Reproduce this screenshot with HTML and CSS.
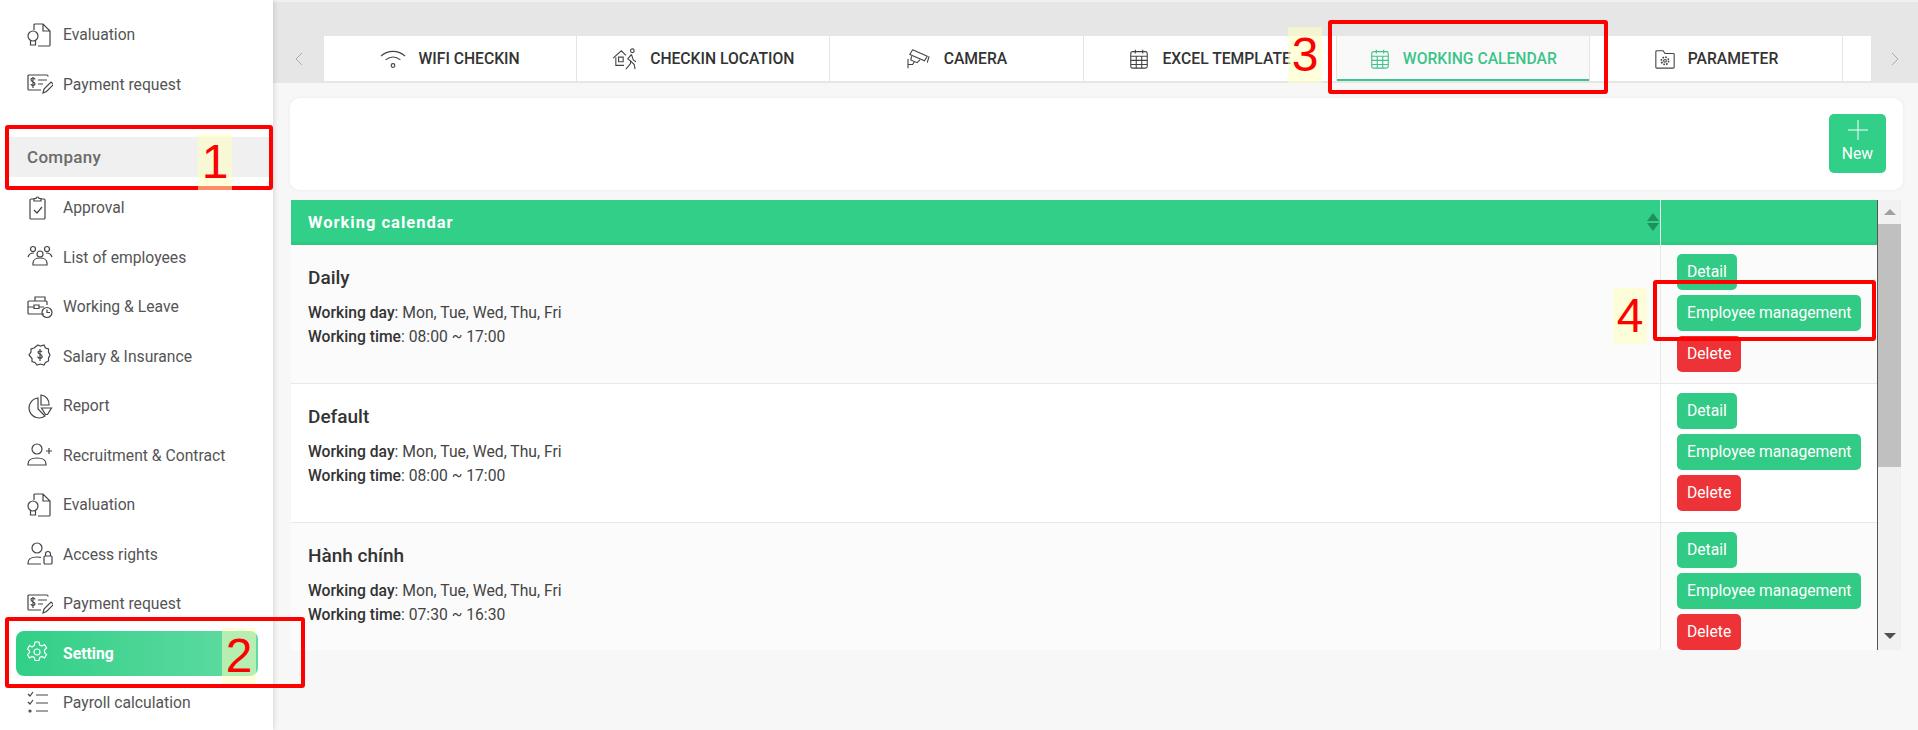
FILE: index.html
```html
<!DOCTYPE html>
<html lang="en">
<head>
    <meta charset="UTF-8">
    <title>Working calendar</title>
    <link rel="stylesheet" href="styles.css">
</head>
<body>
    <aside class="sidebar">
        <a class="nav-item">
            <svg class="icon" viewBox="0 0 26 26"><path d="M7 8V3a1 1 0 0 1 1-1h8l7 7v14a1 1 0 0 1-1 1H11M16 2v7h7"/><circle cx="6" cy="14" r="5"/><path d="M3.500 18.500V23h5v-4.500"/></svg>
            <span>Evaluation</span>
        </a>
        <a class="nav-item">
            <svg class="icon" viewBox="0 0 26 26"><path d="M21 5.500V5a1 1 0 0 0-1-1H2a1 1 0 0 0-1 1v13a1 1 0 0 0 1 1h12M8 8.500a2 1.500 0 0 0-4 0c0 3 4 1.500 4 4.500a2 1.500 0 0 1-4 0M6 6v11M11 9h9M11 13h5"/><path d="M16 22l1-4 7-7 2.500 2.500-7 7z"/></svg>
            <span>Payment request</span>
        </a>
        <div class="nav-title">Company</div>
        <a class="nav-item">
            <svg class="icon" viewBox="0 0 26 26"><path d="M7 4H4a1 1 0 0 0-1 1v18a1 1 0 0 0 1 1h13a1 1 0 0 0 1-1V5a1 1 0 0 0-1-1h-3"/><path d="M7 6V3.500h2a1.500 1.500 0 0 1 3 0h2V6zM7 15l3 3 5-6"/></svg>
            <span>Approval</span>
        </a>
        <a class="nav-item">
            <svg class="icon" viewBox="0 0 26 26"><circle cx="6" cy="5" r="2.500"/><circle cx="20" cy="5" r="2.500"/><circle cx="13" cy="10" r="3"/><path d="M1 13c1-3 3-4 5-4h1M25 13c-1-3-3-4-5-4h-1M6 21v-2c0-3 3-5 7-5s7 2 7 5v2z"/></svg>
            <span>List of employees</span>
        </a>
        <a class="nav-item">
            <svg class="icon" viewBox="0 0 26 26"><path d="M8 7V3h10v4M17 20H2a1 1 0 0 1-1-1V8a1 1 0 0 1 1-1h17a1 1 0 0 1 1 1v3M1 13h6M12 13h5M7 11h5v3.500H7z"/><circle cx="20" cy="18.500" r="5"/><path d="M20 15.500v3h3"/></svg>
            <span>Working &amp; Leave</span>
        </a>
        <a class="nav-item">
            <svg class="icon" viewBox="0 0 26 26"><path d="M11 2l2.500 1L17 2l1.500 3 3 1 0 3L23 12l-1.500 3 0 3-3 1.500L17 22l-3.500-1L10 22l-2-2.500-3-1 0-3L2 12l2-3 0-3 3-1z"/><path d="M15 9a2.200 1.700 0 0 0-4 0c0 3 4.200 1.500 4.200 4.500a2.200 1.700 0 0 1-4.400 0M13 6v12"/></svg>
            <span>Salary &amp; Insurance</span>
        </a>
        <a class="nav-item">
            <svg class="icon" viewBox="0 0 26 26"><path d="M11 5a10 10 0 1 0 7 18l-7-7z"/><path d="M14 2a9 9 0 0 1 8 10h-8zM14.500 15h10l-4 6.500h-2z"/></svg>
            <span>Report</span>
        </a>
        <a class="nav-item">
            <svg class="icon" viewBox="0 0 26 26"><circle cx="10" cy="7" r="5"/><path d="M1 23v-1c0-4 4-6 9-6s9 2 9 6v1zM19 9h6M22 6v6"/></svg>
            <span>Recruitment &amp; Contract</span>
        </a>
        <a class="nav-item">
            <svg class="icon" viewBox="0 0 26 26"><path d="M7 8V3a1 1 0 0 1 1-1h8l7 7v14a1 1 0 0 1-1 1H11M16 2v7h7"/><circle cx="6" cy="14" r="5"/><path d="M3.500 18.500V23h5v-4.500"/></svg>
            <span>Evaluation</span>
        </a>
        <a class="nav-item">
            <svg class="icon" viewBox="0 0 26 26"><circle cx="10" cy="7" r="5"/><path d="M14 23H1v-1c0-4 4-6 9-6 1 0 3 0 4 .5"/><rect x="17" y="15" width="8" height="8" rx="1"/><path d="M18.500 15v-2a2.500 2.500 0 0 1 5 0v2"/></svg>
            <span>Access rights</span>
        </a>
        <a class="nav-item">
            <svg class="icon" viewBox="0 0 26 26"><path d="M21 5.500V5a1 1 0 0 0-1-1H2a1 1 0 0 0-1 1v13a1 1 0 0 0 1 1h12M8 8.500a2 1.500 0 0 0-4 0c0 3 4 1.500 4 4.500a2 1.500 0 0 1-4 0M6 6v11M11 9h9M11 13h5"/><path d="M16 22l1-4 7-7 2.500 2.500-7 7z"/></svg>
            <span>Payment request</span>
        </a>
        <a class="nav-item active">
            <svg class="icon" viewBox="0 0 26 26"><circle cx="10" cy="12" r="3"/><path d="M8 2h4l.700 3 2.300 1 2.500-1.500 2 3.500-2 2 0 2.500 2 2-2 3.500-2.500-1.500-2.300 1-.700 3H8l-.700-3-2.300-1-2.500 1.500-2-3.500 2-2V11l-2-2 2-3.500L5 7l2.300-1.500z"/></svg>
            <span>Setting</span>
        </a>
        <a class="nav-item">
            <svg class="icon" viewBox="0 0 26 26"><path d="M1 4l2 2 3-4M1 12l2 2 3-4M9 5h12M9 13h12M9 21h12"/><circle cx="3" cy="21" r="1"/></svg>
            <span>Payroll calculation</span>
        </a>
    </aside>

    <main class="content">
        <div class="tab-bar">
            <div class="tab-arrow">
                <svg viewBox="0 0 10 16"><path d="M8 2L2 8l6 6"/></svg>
            </div>
            <div class="tabs">
                <a class="tab">
                    <svg class="icon" viewBox="0 0 28 22"><path d="M1 8c7-7 19-7 26 0M6 12c5-4 11-4 16 0"/><circle cx="14" cy="18" r="2"/></svg>
                    WIFI CHECKIN
                </a>
                <a class="tab">
                    <svg class="icon" viewBox="0 0 28 24"><path d="M1 11L10 3l5 5M4 10v9h9M7 10h5v5H7z"/><circle cx="22" cy="3" r="2"/><path d="M21 7l-4 5 3 2v3l-5 6M21 7l2 6 3 2M20 14l4 4 1 5"/></svg>
                    CHECKIN LOCATION
                </a>
                <a class="tab">
                    <svg class="icon" viewBox="0 0 26 24"><path d="M6 2l16 7-3 5L3 7zM5 9l-1 4 7 3 3-3M24 9l-2 7M1 12v10M1 18h5l2-3"/></svg>
                    CAMERA
                </a>
                <a class="tab">
                    <svg class="icon square" viewBox="0 0 24 24"><rect x="3" y="4" width="18" height="18" rx="2"/><path d="M3 9h18M3 13.500h18M3 18h18M9 9v13M15 9v13M8 2v4M16 2v4"/></svg>
                    EXCEL TEMPLATE
                </a>
                <a class="tab current">
                    <svg class="icon square" viewBox="0 0 24 24"><rect x="3" y="4" width="18" height="18" rx="2"/><path d="M3 9h18M3 13.500h18M3 18h18M9 9v13M15 9v13M8 2v4M16 2v4"/></svg>
                    WORKING CALENDAR
                </a>
                <a class="tab">
                    <svg class="icon square" viewBox="0 0 24 24"><path d="M2 20V4a1 1 0 0 1 1-1h7l2 3h9a1 1 0 0 1 1 1v14a1 1 0 0 1-1 1H3a1 1 0 0 1-1-1z"/><circle cx="12" cy="14" r="1.500"/><circle cx="12" cy="14" r="4" stroke-width="1.800" stroke-dasharray="1.800 1.300"/></svg>
                    PARAMETER
                </a>
                <a class="tab"></a>
            </div>
            <div class="tab-arrow">
                <svg viewBox="0 0 10 16"><path d="M2 2l6 6-6 6"/></svg>
            </div>
        </div>

        <section class="toolbar">
            <button class="btn-new">
                <svg viewBox="0 0 20 20"><path d="M10 0v20M0 10h20"/></svg>
                New
            </button>
        </section>

        <section class="table-wrap">
            <div class="table">
                <div class="table-head">
                    <div class="head-cell">
                        Working calendar
                        <span class="sort"></span>
                    </div>
                    <div class="head-cell"></div>
                </div>

                <div class="row">
                    <div class="cell">
                        <h3>Daily</h3>
                        <p><strong>Working day</strong>: Mon, Tue, Wed, Thu, Fri</p>
                        <p><strong>Working time</strong>: 08:00 ~ 17:00</p>
                    </div>
                    <div class="cell actions">
                        <button class="btn">Detail</button>
                        <button class="btn">Employee management</button>
                        <button class="btn danger">Delete</button>
                    </div>
                </div>
                <div class="row">
                    <div class="cell">
                        <h3>Default</h3>
                        <p><strong>Working day</strong>: Mon, Tue, Wed, Thu, Fri</p>
                        <p><strong>Working time</strong>: 08:00 ~ 17:00</p>
                    </div>
                    <div class="cell actions">
                        <button class="btn">Detail</button>
                        <button class="btn">Employee management</button>
                        <button class="btn danger">Delete</button>
                    </div>
                </div>
                <div class="row">
                    <div class="cell">
                        <h3>Hành chính</h3>
                        <p><strong>Working day</strong>: Mon, Tue, Wed, Thu, Fri</p>
                        <p><strong>Working time</strong>: 07:30 ~ 16:30</p>
                    </div>
                    <div class="cell actions">
                        <button class="btn">Detail</button>
                        <button class="btn">Employee management</button>
                        <button class="btn danger">Delete</button>
                    </div>
                </div>
            </div>
            <div class="scrollbar">
                <span class="scroll-up"></span>
                <span class="scroll-thumb"></span>
                <span class="scroll-down"></span>
            </div>
        </section>
    </main>

    <!-- red markup drawn on top of the screenshot -->
    <div class="mark box-1"></div>
    <div class="mark box-2"></div>
    <div class="mark box-3"></div>
    <div class="mark box-4"></div>
    <div class="step step-1">1</div>
    <div class="step step-2">2</div>
    <div class="step step-3">3</div>
    <div class="step step-4">4</div>
</body>
</html>
```

FILE: styles.css
```css
* {
    box-sizing: border-box;
}

body {
    margin: 0;
    height: 730px;
    overflow: hidden;
    display: flex;
    font-family: Roboto, Arial, sans-serif;
    font-size: 15.7px;
    color: #333;
    background-color: #f7f7f7;
}

.icon {
    flex: none;
    fill: none;
    stroke: currentColor;
    stroke-width: 1.2;
}

/* Sidebar */
.sidebar {
    flex: 0 0 273px;
    height: 730px;
    overflow: hidden;
    padding-top: 10px;
    background-color: white;
    box-shadow: 0 0 6px rgba(0, 0, 0, 0.18);
    position: relative;
    z-index: 1;
}

.nav-item {
    display: flex;
    align-items: center;
    gap: 10px;
    height: 49.5px;
    padding-left: 27px;
    color: #555;
}

.nav-item .icon {
    width: 26px;
    height: 26px;
    color: #444;
}

.nav-item.active {
    height: 45px;
    margin: 2px 15px 2.500px 16px;
    padding-left: 11px;
    border-radius: 8px;
    font-weight: 700;
    color: white;
    background: linear-gradient(90deg, #31cf87, #62dba3);
}

.nav-item.active .icon {
    color: white;
}

.nav-title {
    height: 40px;
    margin: 28px 3px 6px 8px;
    padding-left: 19px;
    line-height: 40px;
    font-size: 17px;
    font-weight: 500;
    letter-spacing: 0.3px;
    color: #6b6b6b;
    background-color: #f0f0f0;
}

/* Main column */
.content {
    flex: 1;
    min-width: 0;
}

.tab-bar {
    display: flex;
    height: 83px;
    padding-top: 34px;
    background-color: #e6e6e6;
    border-top: 2px solid #f0f0f0;
}

.tab-arrow {
    flex: 0 0 51px;
    height: 45px;
    display: flex;
    align-items: center;
    justify-content: center;
}

.tab-arrow:last-child {
    flex-basis: 47px;
}

.tab-arrow svg {
    width: 10px;
    height: 16px;
    fill: none;
    stroke: #aaa;
    stroke-width: 1;
}

.tabs {
    flex: 1;
    min-width: 0;
    display: flex;
    height: 45px;
    overflow: hidden;
    background-color: white;
}

.tab {
    flex: 0 0 253.200px;
    display: flex;
    align-items: center;
    justify-content: center;
    gap: 12px;
    font-size: 15.7px;
    font-weight: 500;
    color: #333;
    border-right: 1px solid #e4e4e4;
}

.tab .icon {
    width: 26px;
    height: 22px;
    color: #444;
}

.tab .icon.square {
    width: 22px;
}

.tab.current {
    color: #3cc48a;
    background-color: #f9f9f9;
    box-shadow: inset 0 -2px 0 #3cc48a;
}

.tab.current .icon {
    color: #3cc48a;
}

.toolbar {
    display: flex;
    justify-content: flex-end;
    height: 92px;
    margin: 15px 15px 10px 17px;
    padding: 16px 17px;
    border-radius: 10px;
    background-color: white;
    box-shadow: 0 0 4px rgba(0, 0, 0, 0.05);
}

.btn-new {
    width: 57px;
    height: 59px;
    padding: 6px 0 0;
    display: flex;
    flex-direction: column;
    align-items: center;
    gap: 4px;
    border: none;
    border-radius: 5px;
    font-family: inherit;
    font-size: 15.7px;
    color: white;
    background-color: #31cf87;
}

.btn-new svg {
    width: 20px;
    height: 20px;
    fill: none;
    stroke: white;
    stroke-width: 1;
}

/* Table */
.table-wrap {
    display: flex;
    height: 450px;
    margin: 0 17px 0 18px;
    overflow: hidden;
}

.table {
    width: 1587px;
    overflow: hidden;
    border-right: 1px solid #555;
}

.table-head {
    display: grid;
    grid-template-columns: 1fr 217px;
    height: 45px;
    color: white;
    background-color: #31cf87;
    border-bottom: 3px solid #2cc97f;
}

.head-cell {
    position: relative;
    padding-left: 17px;
    line-height: 45px;
    font-size: 16.500px;
    font-weight: 700;
    letter-spacing: 1px;
}

.head-cell + .head-cell {
    border-left: 1px solid #e8f8f0;
}

/* two little triangles */
.sort {
    position: absolute;
    right: 1px;
    top: 13px;
    width: 12px;
    height: 18px;
}

.sort::before,
.sort::after {
    content: "";
    position: absolute;
    left: 0;
    border-left: 6px solid transparent;
    border-right: 6px solid transparent;
}

.sort::before {
    top: 0;
    border-bottom: 8px solid #1f8f5c;
}

.sort::after {
    bottom: 0;
    border-top: 8px solid #1f8f5c;
}

.row {
    display: grid;
    grid-template-columns: 1fr 217px;
    height: 139px;
    background-color: #fbfbfb;
    border-bottom: 1px solid #e8e8e8;
}

.row:nth-child(odd) {
    background-color: white;
}

.cell {
    padding: 22px 17px 0;
}

.cell h3 {
    margin: 0 0 13px;
    font-size: 19px;
    line-height: 21px;
    font-weight: 500;
    color: #333;
}

.cell p {
    margin: 0;
    line-height: 24px;
    color: #444;
}

.cell strong {
    font-weight: 500;
    color: #333;
}

.actions {
    display: flex;
    flex-direction: column;
    align-items: flex-start;
    gap: 5px;
    padding: 9px 0 0 16px;
    border-left: 1px solid #e8e8e8;
}

.btn {
    height: 36px;
    padding: 0 10px 2px;
    border: none;
    border-radius: 5px;
    font-family: inherit;
    font-size: 15.7px;
    white-space: nowrap;
    color: white;
    background-color: #31cb85;
}

.btn.danger {
    background-color: #ee3338;
}

.scrollbar {
    flex: 1;
    display: flex;
    flex-direction: column;
    align-items: center;
    background-color: #f1f1f1;
    position: relative;
}

.scroll-up,
.scroll-down {
    position: absolute;
    left: 6px;
    width: 0;
    height: 0;
    border-left: 6px solid transparent;
    border-right: 6px solid transparent;
}

.scroll-up {
    top: 9px;
    border-bottom: 6px solid #a0a0a0;
}

.scroll-down {
    bottom: 11px;
    border-top: 6px solid #505050;
}

.scroll-thumb {
    width: 100%;
    height: 243px;
    margin-top: 24px;
    background-color: #c0c0c0;
}

/* Annotations */
.mark {
    position: absolute;
    border: 4px solid #f00;
    border-radius: 3px;
    z-index: 3;
}

.box-1 {
    left: 5px;
    top: 125px;
    width: 268px;
    height: 65px;
}

.box-2 {
    left: 5px;
    top: 617px;
    width: 300px;
    height: 71px;
}

.box-3 {
    left: 1328px;
    top: 20px;
    width: 280px;
    height: 74px;
}

.box-4 {
    left: 1653px;
    top: 280px;
    width: 223px;
    height: 61px;
}

.step {
    position: absolute;
    width: 34px;
    height: 56px;
    line-height: 56px;
    text-align: center;
    font-family: "Liberation Sans", Arial, sans-serif;
    font-size: 48px;
    color: #f00;
    background-color: rgba(255, 255, 190, 0.55);
    z-index: 4;
}

.step-1 {
    left: 198px;
    top: 134px;
}

.step-2 {
    left: 222px;
    top: 628px;
}

.step-3 {
    left: 1288px;
    top: 27px;
}

.step-4 {
    left: 1613px;
    top: 288px;
}
```
